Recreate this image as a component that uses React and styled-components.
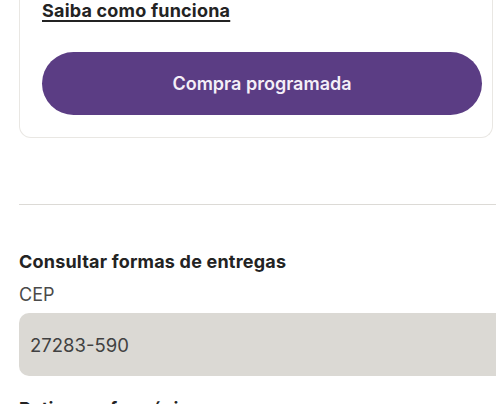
import React from "react";
import styled, { createGlobalStyle } from "styled-components";

const Global = createGlobalStyle`
  body {
    margin: 0;
    background: #ffffff;
    font-family: "Inter", "Noto Sans", sans-serif;
    color: #222222;
  }
`;

const Page = styled.div`
  width: 496px;
  height: 404px;
  overflow: hidden;
  padding-left: 19px;
  box-sizing: border-box;
`;

const Card = styled.div`
  width: 474px;
  box-sizing: border-box;
  border: 1px solid #e9e7e3;
  border-top: none;
  border-radius: 0 0 12px 12px;
  padding: 0 10px 22px 22px;
`;

const Link = styled.a`
  display: inline-block;
  font-size: 18px;
  font-weight: 700;
  line-height: 22px;
  color: #232323;
  letter-spacing: 0.2px;
  text-decoration: underline;
  text-underline-offset: 3px;
  text-decoration-thickness: 1.5px;
`;

const Button = styled.button`
  display: flex;
  align-items: center;
  justify-content: center;
  width: 440px;
  height: 63px;
  margin-top: 30px;
  border: none;
  border-radius: 32px;
  background: #5b3d84;
  color: #f4eff8;
  font-family: "Inter", "Noto Sans", sans-serif;
  font-size: 18px;
  font-weight: 600;
`;

const Divider = styled.hr`
  margin: 66px 0 0;
  border: none;
  border-top: 1.5px solid #dcdad6;
`;

const Section = styled.div`
  padding-top: 46px;
`;

const Heading = styled.div`
  font-size: 18px;
  font-weight: 700;
  line-height: 22px;
  color: #232323;
  letter-spacing: 0.2px;
`;

const Label = styled.div`
  margin-top: 11px;
  font-size: 18px;
  line-height: 22px;
  color: #4a4a4a;
`;

const Field = styled.div`
  display: flex;
  align-items: center;
  margin-top: 7px;
  height: 63px;
  padding-left: 11px;
  border-radius: 10px 0 0 10px;
  background: #dbd9d4;
  font-size: 18.5px;
  color: #414141;
`;

const NextHeading = styled(Heading)`
  margin-top: 22px;
`;

export default function App() {
  return (
    <>
      <Global />
      <Page>
        <Card>
          <Link>Saiba como funciona</Link>
          <Button>Compra programada</Button>
        </Card>
        <Divider />
        <Section>
          <Heading>Consultar formas de entregas</Heading>
          <Label>CEP</Label>
          <Field>27283-590</Field>
          <NextHeading>Retirar na farmácia</NextHeading>
        </Section>
      </Page>
    </>
  );
}
